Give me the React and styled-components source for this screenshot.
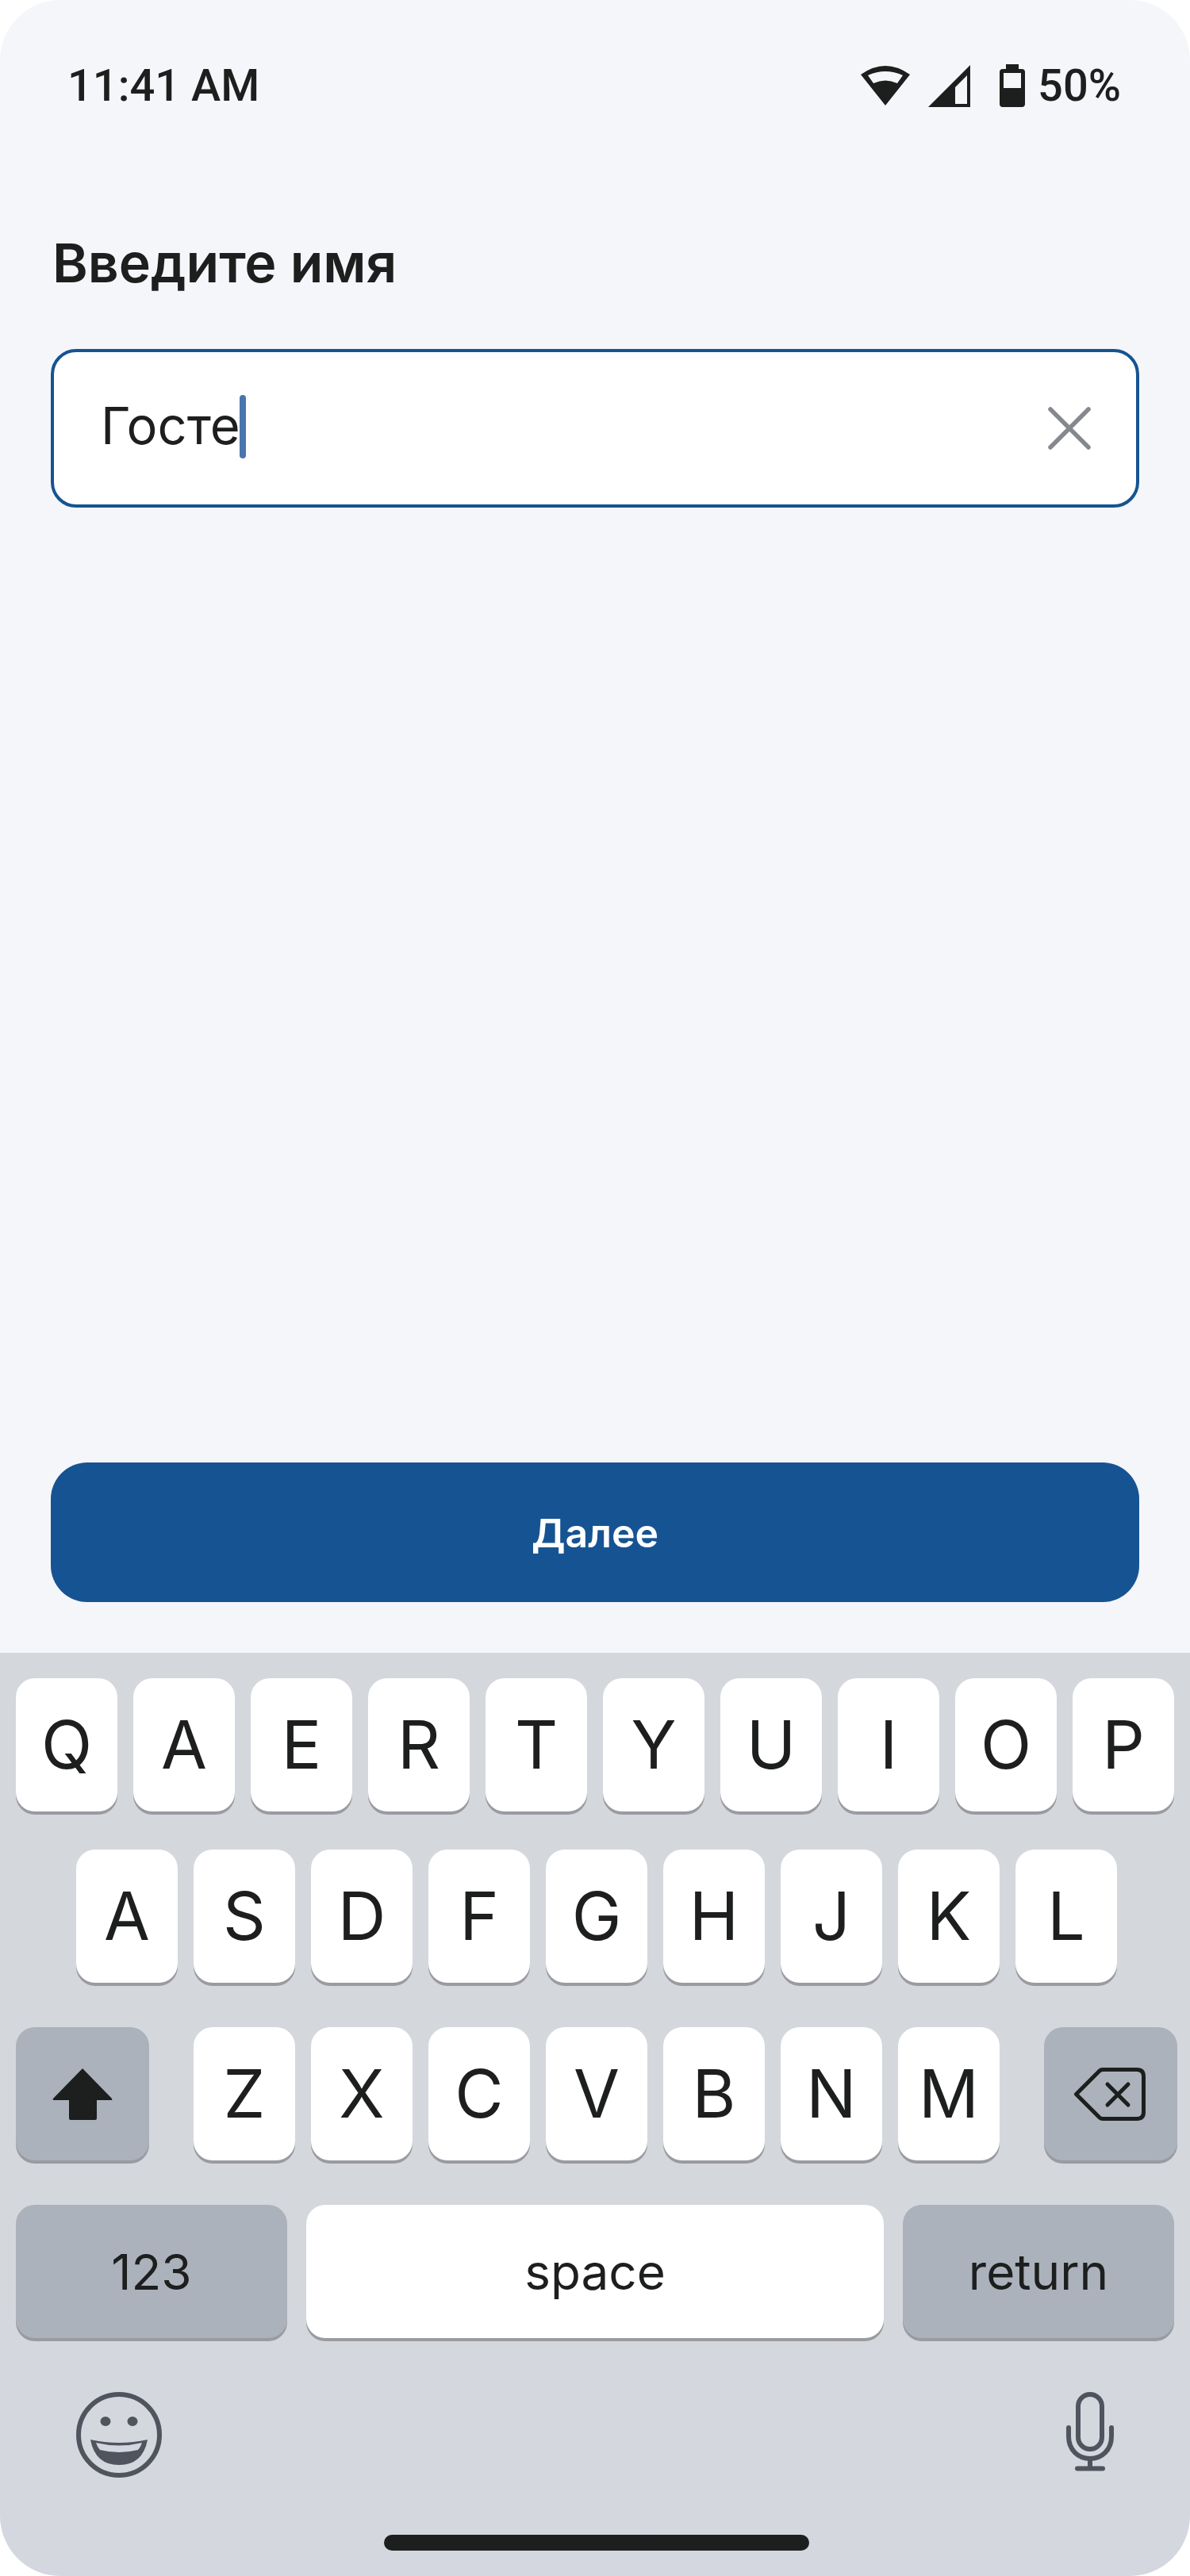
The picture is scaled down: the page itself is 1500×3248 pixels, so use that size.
import styled, { createGlobalStyle } from "styled-components";

const GlobalStyle = createGlobalStyle`
    * {
        box-sizing: border-box;
    }
    body {
        margin: 0;
        background: #ffffff;
        font-family: "Inter", "Liberation Sans", sans-serif;
        color: #1d1f1e;
    }
`;

const Screen = styled.div`
    width: 1500px;
    height: 3248px;
    display: flex;
    flex-direction: column;
    background: #f4f6fa;
    border-radius: 76px;
    overflow: hidden;
`;

const StatusBar = styled.div`
    height: 60px;
    margin-top: 78px;
    padding: 0 87px 0 85px;
    display: flex;
    align-items: center;
    justify-content: space-between;
    font-family: "Roboto", "Liberation Sans", sans-serif;
    font-size: 56px;
    line-height: 60px;
`;

const Time = styled.span`
    font-weight: 500;
`;

const StatusIcons = styled.div`
    display: flex;
    align-items: center;
`;

const Percent = styled.span`
    margin-left: 16px;
    font-weight: 500;
`;

const StatusIcon = styled.svg`
    display: block;
    fill: #1d1f1e;
    margin-left: ${(p) => p.$gap || 0}px;
`;

const Content = styled.main`
    flex: 1;
    display: flex;
    flex-direction: column;
    padding: 154px 64px 64px;
`;

const Title = styled.h1`
    margin: 0;
    padding: 0 0 2px 2px;
    font-size: 68px;
    line-height: 78px;
    font-weight: 600;
`;

const InputBox = styled.div`
    margin-top: 68px;
    height: 200px;
    padding: 0 57px 0 59px;
    display: flex;
    align-items: center;
    justify-content: space-between;
    background: #ffffff;
    border: 4px solid #165392;
    border-radius: 32px;
`;

const InputValue = styled.div`
    display: flex;
    align-items: center;
    padding-bottom: 4px;
    font-size: 65px;
    line-height: 80px;
`;

const InputText = styled.span`
    margin-bottom: 2px;
`;

const Caret = styled.span`
    width: 8px;
    height: 80px;
    margin-left: -1px;
    border-radius: 4px;
    background: #4a76ad;
`;

const ClearIcon = styled.svg`
    display: block;
    stroke: #85888d;
    stroke-width: 5.5;
    stroke-linecap: round;
`;

const NextButton = styled.button`
    margin-top: auto;
    height: 176px;
    padding: 2px 0 0;
    border: 0;
    border-radius: 46px;
    background: #165392;
    color: #ffffff;
    font-family: inherit;
    font-size: 50px;
    font-weight: 600;
`;

const Keyboard = styled.section`
    padding: 32px 0 32px;
    display: flex;
    flex-direction: column;
    align-items: stretch;
    background: linear-gradient(#d4d7dc 70%, #d4d7df);
`;

const KeyRow = styled.div`
    display: flex;
    margin-top: ${(p) => p.$top || 0}px;
    padding: 0 ${(p) => p.$right || 20}px 0 ${(p) => p.$left || 20}px;
    gap: ${(p) => p.$gap || 20}px;
`;

const Key = styled.div`
    width: ${(p) => p.$width || 128}px;
    flex: ${(p) => (p.$grow ? 1 : "none")};
    height: 168px;
    padding-top: ${(p) => (p.$size ? 2 : 0)}px;
    display: flex;
    align-items: center;
    justify-content: center;
    border-radius: 24px;
    background: ${(p) => (p.$dark ? "#abb2bc" : "#ffffff")};
    box-shadow: 0 4px 0 #9a9ba1;
    font-size: ${(p) => p.$size || 84}px;
    line-height: 1;
`;

const BackspaceIcon = styled.svg`
    display: block;
    margin-right: 3px;
    fill: none;
    stroke: #1d1f1e;
    stroke-width: 5;
    stroke-linecap: round;
    stroke-linejoin: round;
`;

const LetterGroup = styled.div`
    display: flex;
    gap: 20px;
    margin: 0 auto;
`;

const Tools = styled.div`
    margin-top: 68px;
    height: 108px;
    padding: 0 96px;
    display: flex;
    justify-content: space-between;
`;

const ToolIcon = styled.svg`
    display: block;
    fill: none;
    stroke: #50545e;
`;

const HomeBar = styled.div`
    width: 536px;
    height: 20px;
    margin: 72px auto 0 484px;
    border-radius: 10px;
    background: #1d1f1e;
`;

const row1 = ["Q", "A", "E", "R", "T", "Y", "U", "I", "O", "P"];
const row2 = ["A", "S", "D", "F", "G", "H", "J", "K", "L"];
const row3 = ["Z", "X", "C", "V", "B", "N", "M"];

const App = () => {
    return (
        <Screen>
            <GlobalStyle />
            <StatusBar>
                <Time>11:41 AM</Time>
                <StatusIcons>
                    <StatusIcon width="62" height="50" viewBox="0 0 62 50" fillRule="evenodd">
                        <path d="M0 11 Q31 -11 62 11 L31 50 Z M9 12 L16 22 Q31 15 46 22 L53 12 Q31 2 9 12 Z" />
                    </StatusIcon>
                    <StatusIcon $gap={23} width="53" height="53" viewBox="0 0 53 53" fillRule="evenodd">
                        <path d="M0 53 L53 0 V53 Z M34 49 H49 V13 L34 28 Z" />
                    </StatusIcon>
                    <StatusIcon $gap={37} width="32" height="54" viewBox="0 0 32 54" fillRule="evenodd">
                        <path d="M8 0 H24 V6 H28 Q32 6 32 10 V50 Q32 54 28 54 H4 Q0 54 0 50 V10 Q0 6 4 6 H8 Z M5 11 V30 H27 V11 Z" />
                    </StatusIcon>
                    <Percent>50%</Percent>
                </StatusIcons>
            </StatusBar>

            <Content>
                <Title>Введите имя</Title>
                <InputBox>
                    <InputValue>
                        <InputText>Госте</InputText>
                        <Caret />
                    </InputValue>
                    <ClearIcon width="54" height="54" viewBox="0 0 54 54">
                        <path d="M3 3 L51 51 M51 3 L3 51" />
                    </ClearIcon>
                </InputBox>
                <NextButton>Далее</NextButton>
            </Content>

            <Keyboard>
                <KeyRow>
                    {row1.map((k, i) => (
                        <Key key={i}>{k}</Key>
                    ))}
                </KeyRow>
                <KeyRow $top={48} $left={96} $right={92}>
                    <LetterGroup>
                        {row2.map((k) => (
                            <Key key={k}>{k}</Key>
                        ))}
                    </LetterGroup>
                </KeyRow>
                <KeyRow $top={56} $right={16}>
                    <Key $dark $width={168}>
                        <svg width="76" height="65" viewBox="0 0 76 65" fill="#1d1f1e">
                            <path d="M38 0 L75 38 Q76 40 74 40 H56 V63 Q56 65 54 65 H23 Q21 65 21 63 V40 H2 Q0 40 1 38 Z" />
                        </svg>
                    </Key>
                    <LetterGroup>
                        {row3.map((k) => (
                            <Key key={k}>{k}</Key>
                        ))}
                    </LetterGroup>
                    <Key $dark $width={168}>
                        <BackspaceIcon width="91" height="67" viewBox="0 0 91 67">
                            <path d="M3.5 33.5 L32 5 Q34 2.5 37 2.5 H80 Q88.5 2.5 88.5 11 V56 Q88.5 64.5 80 64.5 H37 Q34 64.5 32 62 Z" />
                            <path d="M43 21 L69 47 M69 21 L43 47" />
                        </BackspaceIcon>
                    </Key>
                </KeyRow>
                <KeyRow $top={56} $gap={24}>
                    <Key $dark $width={342} $size={62}>123</Key>
                    <Key $grow $size={62}>space</Key>
                    <Key $dark $width={342} $size={62}>return</Key>
                </KeyRow>
                <Tools>
                    <ToolIcon width="108" height="108" viewBox="0 0 108 108">
                        <circle cx="54" cy="54" r="51" strokeWidth="6" />
                        <ellipse cx="37" cy="37" rx="6.5" ry="6" fill="#50545e" stroke="none" />
                        <ellipse cx="71" cy="37" rx="6.5" ry="6" fill="#50545e" stroke="none" />
                        <path d="M18 60 Q54 68 90 60 Q84 92 54 92 Q24 92 18 60 Z" fill="#50545e" stroke="none" />
                        <path d="M25 64 Q54 71 83 64 Q81 70 78 73 Q54 79 30 73 Q27 70 25 64 Z" fill="#d4d7df" stroke="none" />
                    </ToolIcon>
                    <ToolIcon width="60" height="100" viewBox="0 0 60 100" strokeWidth="6" strokeLinecap="round">
                        <rect x="15" y="3" width="30" height="69" rx="15" />
                        <path d="M3 45 V56 C3 73 15 84 30 84 C45 84 57 73 57 56 V45" />
                        <path d="M30 84 V96 M14 96.5 H46" />
                    </ToolIcon>
                </Tools>
                <HomeBar />
            </Keyboard>
        </Screen>
    );
};

export default App;
